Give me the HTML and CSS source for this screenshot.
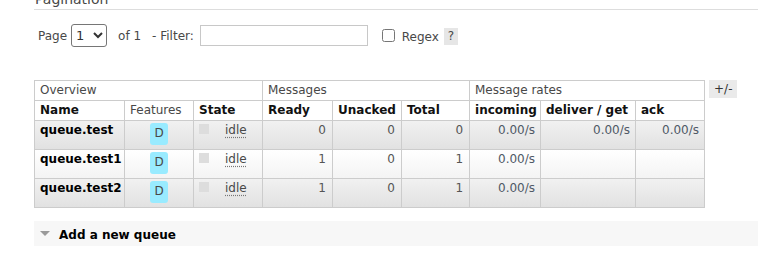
FILE: index.html
```html
<!DOCTYPE html>
<html lang="en">
<head>
    <meta charset="UTF-8">
    <title>Queues</title>
    <link rel="stylesheet" href="styles.css">
</head>
<body>

    <div class="page">
        <h3 class="section-title">Pagination</h3>

        <div class="pager">
            <label class="pager-label">Page</label>
            <select class="page-select">
                <option>1</option>
            </select>
            <span class="pager-of">of 1</span>
            <span class="pager-filter">- Filter:</span>
            <input type="text" class="filter-input">
            <input type="checkbox" class="regex-box" id="regex">
            <label for="regex" class="regex-label">Regex</label>
            <span class="help">?</span>
        </div>

        <div class="table-wrap">
            <table class="list">
                <colgroup>
                    <col style="width: 90px">
                    <col style="width: 69px">
                    <col style="width: 69px">
                    <col style="width: 70px">
                    <col style="width: 69px">
                    <col style="width: 68px">
                    <col style="width: 71px">
                    <col style="width: 95px">
                    <col style="width: 69px">
                </colgroup>
                <thead>
                    <tr class="group-row">
                        <th colspan="3">Overview</th>
                        <th colspan="3">Messages</th>
                        <th colspan="3">Message rates</th>
                    </tr>
                    <tr class="head-row">
                        <th>Name</th>
                        <th class="plain">Features</th>
                        <th>State</th>
                        <th>Ready</th>
                        <th>Unacked</th>
                        <th>Total</th>
                        <th>incoming</th>
                        <th>deliver / get</th>
                        <th>ack</th>
                    </tr>
                </thead>
                <tbody>
                    <tr class="alt1">
                        <td class="name">queue.test</td>
                        <td class="center"><span class="badge">D</span></td>
                        <td><span class="state-dot"></span><abbr class="state">idle</abbr></td>
                        <td class="num">0</td>
                        <td class="num">0</td>
                        <td class="num">0</td>
                        <td class="num rate">0.00/s</td>
                        <td class="num rate">0.00/s</td>
                        <td class="num rate">0.00/s</td>
                    </tr>
                    <tr class="alt2">
                        <td class="name">queue.test1</td>
                        <td class="center"><span class="badge">D</span></td>
                        <td><span class="state-dot"></span><abbr class="state">idle</abbr></td>
                        <td class="num">1</td>
                        <td class="num">0</td>
                        <td class="num">1</td>
                        <td class="num rate">0.00/s</td>
                        <td></td>
                        <td></td>
                    </tr>
                    <tr class="alt1">
                        <td class="name">queue.test2</td>
                        <td class="center"><span class="badge">D</span></td>
                        <td><span class="state-dot"></span><abbr class="state">idle</abbr></td>
                        <td class="num">1</td>
                        <td class="num">0</td>
                        <td class="num">1</td>
                        <td class="num rate">0.00/s</td>
                        <td></td>
                        <td></td>
                    </tr>
                </tbody>
            </table>
            <span class="toggle">+/-</span>
        </div>

        <div class="section">
            <svg class="arrow" width="10" height="5" viewBox="0 0 10 5"><path d="M0 0 L10 0 L5 5 Z" fill="#9a9a9a"/></svg>
            <span class="section-name">Add a new queue</span>
        </div>
    </div>

</body>
</html>
```

FILE: styles.css
```css
body {
    font-family: 'DejaVu Sans', Verdana, sans-serif;
    font-size: 12px;
    color: #484848;
    background: #fff;
    margin: 0;
    padding: 0;
}

.page {
    padding-left: 34px;
    overflow: hidden;
}

.section-title {
    margin: -8px 0 0;
    padding: 0 0 2px 1px;
    font-size: 14px;
    font-weight: normal;
    line-height: 15px;
    color: #484848;
    border-bottom: 1px solid #ddd;
}

/* Pagination row */
.pager {
    display: flex;
    align-items: center;
    height: 23px;
    margin-top: 14px;
    padding-left: 4px;
}

.page-select {
    width: 36px;
    height: 23px;
    margin-left: 4px;
    font-family: 'DejaVu Sans', Verdana, sans-serif;
    font-size: 13px;
    color: #333;
    border: 1px solid #767676;
    border-radius: 3px;
    background: #fff;
}

.pager-of {
    margin-left: 11px;
}

.pager-filter {
    margin-left: 11px;
}

.filter-input {
    width: 168px;
    height: 21px;
    margin: 0 0 0 6px;
    padding: 0 3px;
    box-sizing: border-box;
    border: 1px solid #c8c8c8;
    border-radius: 0;
}

.regex-box {
    width: 13px;
    height: 13px;
    margin: 0 0 0 14px;
}

.regex-label {
    margin-left: 7px;
    margin-top: 2px;
}

.help {
    margin-left: 5px;
    margin-top: 2px;
    padding: 0 4px;
    line-height: 17px;
    background: #e6e6e6;
}

/* Queue table */
.table-wrap {
    display: flex;
    align-items: flex-start;
    margin-top: 33px;
}

table.list {
    border-collapse: collapse;
    table-layout: fixed;
    width: 671px;
    border: 1px solid #ccc;
}

table.list th,
table.list td {
    border: 1px solid #ccc;
    padding: 2px 5px;
    line-height: 15px;
    text-align: left;
    vertical-align: top;
    white-space: nowrap;
}

table.list td {
    padding-bottom: 4px;
}

.group-row th {
    font-weight: normal;
    background: #fff;
}

.head-row th {
    font-weight: bold;
    color: #111;
    background: #fff;
}

.head-row th.plain {
    font-weight: normal;
    color: #484848;
}

tr.alt1 {
    background: linear-gradient(to bottom, #f1f1f1, #e1e1e1);
}

tr.alt2 {
    background: linear-gradient(to bottom, #fff, #f3f3f3);
}

table.list td.name {
    font-weight: bold;
    color: #000;
}

table.list td.center {
    text-align: center;
}

table.list td.num {
    text-align: right;
    padding-right: 6px;
    color: #555;
}

table.list td.rate {
    padding-right: 5px;
    color: #4f5966;
}

.badge {
    display: inline-block;
    vertical-align: top;
    width: 18px;
    height: 22px;
    line-height: 20px;
    border-radius: 3px;
    background: #99ebff;
    color: #484848;
    text-align: center;
}

.state-dot {
    display: inline-block;
    width: 10px;
    height: 10px;
    background: #ddd;
}

.state {
    margin-left: 16px;
    text-decoration: underline dotted #777;
    text-underline-offset: 3px;
}

.toggle {
    margin-left: 4px;
    padding: 0 5px;
    line-height: 18px;
    background: #eaeaea;
    color: #333;
}

/* Collapsed section */
.section {
    display: flex;
    align-items: center;
    height: 25px;
    margin-top: 13px;
    padding-left: 6px;
    background: #f7f7f7;
}

.section-name {
    margin-left: 9px;
    margin-top: 2px;
    font-weight: bold;
    color: #000;
}
```
